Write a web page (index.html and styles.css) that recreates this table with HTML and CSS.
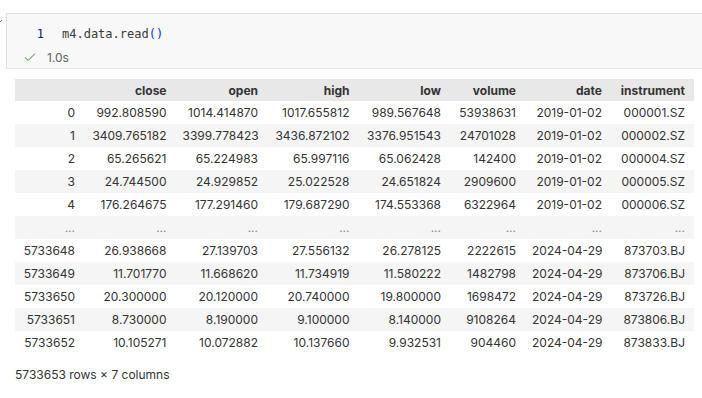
FILE: index.html
```html
<!DOCTYPE html>
<html lang="en">
<head>
    <meta charset="UTF-8">
    <title>notebook cell</title>
    <link rel="stylesheet" href="styles.css">
</head>
<body>
    <div class="cellRow">
        <div class="gutter">
            <svg width="10" height="10" viewBox="0 0 10 10"><path d="M1 3 L5 7 L9 3" fill="none" stroke="#8a8a8a" stroke-width="1"/></svg>
        </div>
        <div class="cell">
            <div class="codeLine">
                <span class="lineNo">1</span>
                <span class="code">m4.data.read<span class="paren">()</span></span>
            </div>
            <div class="status">
                <svg class="check" width="12" height="10" viewBox="0 0 12 10"><path d="M1 5.5 L4.2 8.5 L11 1.5" fill="none" stroke="#388a34" stroke-width="1"/></svg>
                <span class="time">1.0s</span>
            </div>
        </div>
    </div>
    <div class="output">
        <table class="dataframe">
            <colgroup>
                <col class="colIndex">
                <col class="colWide">
                <col class="colWide">
                <col class="colWide">
                <col class="colWide">
                <col class="colVolume">
                <col class="colDate">
                <col class="colInstrument">
            </colgroup>
            <thead>
                <tr><th></th><th>close</th><th>open</th><th>high</th><th>low</th><th>volume</th><th>date</th><th>instrument</th></tr>
            </thead>
            <tbody>
                <tr><th>0</th><td>992.808590</td><td>1014.414870</td><td>1017.655812</td><td>989.567648</td><td>53938631</td><td>2019-01-02</td><td>000001.SZ</td></tr>
                <tr><th>1</th><td>3409.765182</td><td>3399.778423</td><td>3436.872102</td><td>3376.951543</td><td>24701028</td><td>2019-01-02</td><td>000002.SZ</td></tr>
                <tr><th>2</th><td>65.265621</td><td>65.224983</td><td>65.997116</td><td>65.062428</td><td>142400</td><td>2019-01-02</td><td>000004.SZ</td></tr>
                <tr><th>3</th><td>24.744500</td><td>24.929852</td><td>25.022528</td><td>24.651824</td><td>2909600</td><td>2019-01-02</td><td>000005.SZ</td></tr>
                <tr><th>4</th><td>176.264675</td><td>177.291460</td><td>179.687290</td><td>174.553368</td><td>6322964</td><td>2019-01-02</td><td>000006.SZ</td></tr>
                <tr class="dots"><th>...</th><td>...</td><td>...</td><td>...</td><td>...</td><td>...</td><td>...</td><td>...</td></tr>
                <tr><th>5733648</th><td>26.938668</td><td>27.139703</td><td>27.556132</td><td>26.278125</td><td>2222615</td><td>2024-04-29</td><td>873703.BJ</td></tr>
                <tr><th>5733649</th><td>11.701770</td><td>11.668620</td><td>11.734919</td><td>11.580222</td><td>1482798</td><td>2024-04-29</td><td>873706.BJ</td></tr>
                <tr><th>5733650</th><td>20.300000</td><td>20.120000</td><td>20.740000</td><td>19.800000</td><td>1698472</td><td>2024-04-29</td><td>873726.BJ</td></tr>
                <tr><th>5733651</th><td>8.730000</td><td>8.190000</td><td>9.100000</td><td>8.140000</td><td>9108264</td><td>2024-04-29</td><td>873806.BJ</td></tr>
                <tr><th>5733652</th><td>10.105271</td><td>10.072882</td><td>10.137660</td><td>9.932531</td><td>904460</td><td>2024-04-29</td><td>873833.BJ</td></tr>
            </tbody>
        </table>
        <p class="shape">5733653 rows × 7 columns</p>
    </div>
</body>
</html>
```

FILE: styles.css
```css
:root{
    --cellBorder: #e1e1e1;
    --cellBackground: #f8f8f8;
    --textColor: #333333;
    --headerBackground: #e8e8e8;
    --stripe: #f5f5f5;
}
html, body{
    margin: 0;
    background: #ffffff;
    font-family: Inter, "Liberation Sans", sans-serif;
    color: var(--textColor);
}
.cellRow{
    display: flex;
    padding-top: 13px;
}
.gutter{
    width: 6px;
    overflow: hidden;
    display: flex;
    justify-content: flex-end;
    padding-top: 4px;
}
.gutter svg{
    flex: none;
    margin-right: 3px;
}
.cell{
    flex: 1;
    height: 54px;
    border: 1px solid var(--cellBorder);
    border-right: none;
    background: var(--cellBackground);
}
.codeLine{
    display: flex;
    align-items: center;
    gap: 18px;
    height: 18px;
    margin-top: 11px;
    font-family: "DejaVu Sans Mono", monospace;
    font-size: 12px;
}
.lineNo{
    flex: none;
    width: 37px;
    text-align: right;
    color: #0b216f;
}
.code{
    color: #3b3b3b;
}
.paren{
    color: #0431fa;
}
.status{
    display: flex;
    align-items: center;
    height: 16px;
    margin-top: 6px;
    padding-left: 17px;
    font-size: 12px;
    color: #616161;
}
.check{
    margin-right: 11px;
}
.output{
    padding: 10px 0 0 15px;
}
.dataframe{
    border-collapse: collapse;
    table-layout: fixed;
    width: 679px;
    font-size: 12px;
}
.colIndex{
    width: 68px;
}
.colWide{
    width: 91.5px;
}
.colVolume{
    width: 75px;
}
.colDate{
    width: 86px;
}
.colInstrument{
    width: 84px;
}
.dataframe th, .dataframe td{
    height: 23px;
    padding: 0 8px;
    text-align: right;
    white-space: nowrap;
}
.dataframe th:last-child, .dataframe td:last-child{
    padding-right: 9px;
}
.dataframe thead th{
    height: 22px;
    background: var(--headerBackground);
    font-weight: 700;
}
.dataframe tbody th{
    font-weight: 400;
}
.dataframe tbody tr:nth-child(even){
    background: var(--stripe);
}
.dots th, .dots td{
    color: #888888;
}
.shape{
    margin: 13px 0 0 0;
    font-size: 12px;
}
```
